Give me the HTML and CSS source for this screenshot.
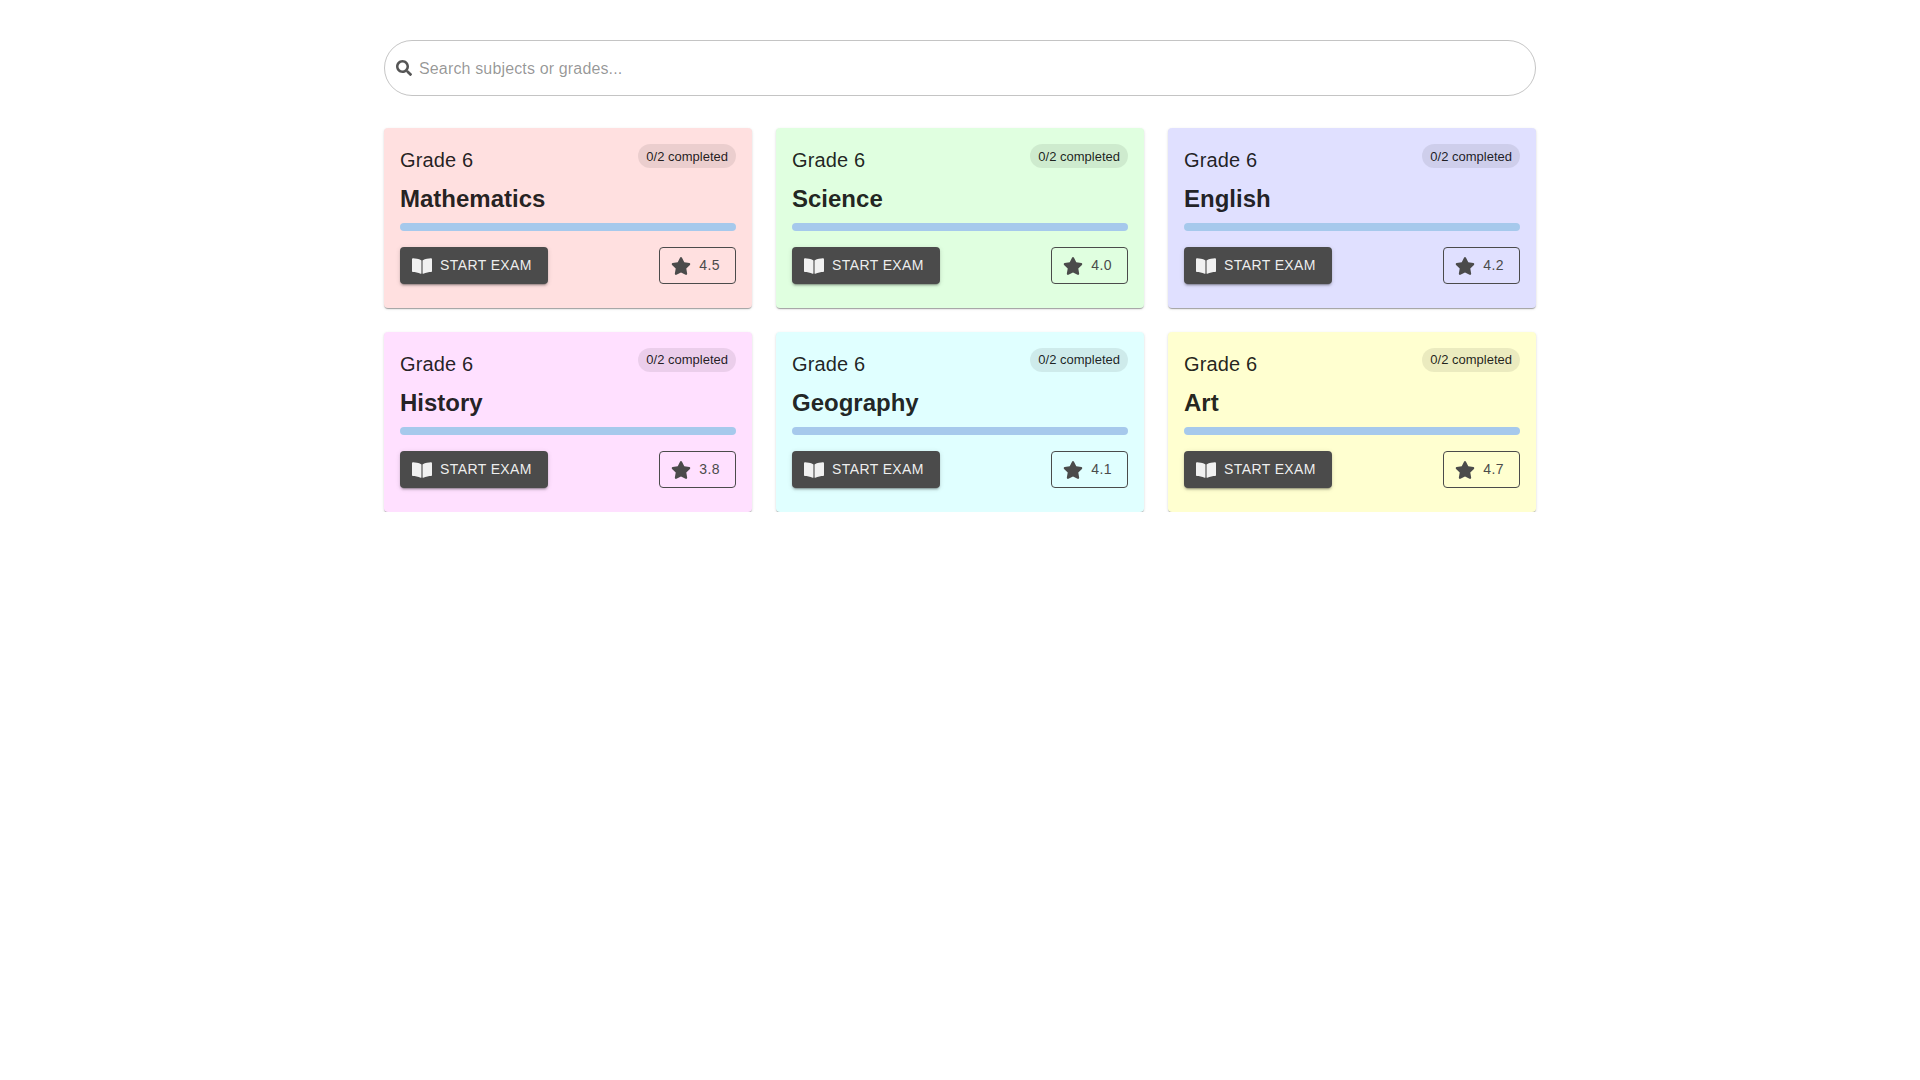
FILE: index.html
```html
<!DOCTYPE html>
<html lang="en">
<head>
<meta charset="utf-8">
<title>Exams</title>
<link rel="stylesheet" href="styles.css">
</head>
<body>
<svg class="defs" width="0" height="0" aria-hidden="true">
  <symbol id="i-book" viewBox="0 0 576 512"><path d="M542.2 32.05c-54.8 3.11-163.7 14.43-231 55.59-4.64 2.84-7.27 7.89-7.27 13.17v363.87c0 11.55 12.63 18.85 23.28 13.49 69.18-34.82 169.23-44.32 218.7-46.92 16.89-.89 30.02-14.43 30.02-30.66V62.75c.01-17.71-15.35-31.74-33.72-30.7zM264.73 87.64C197.5 46.48 88.55 35.17 33.75 32.05 15.38 31.01 0 45.04 0 62.75V400.6c0 16.24 13.13 29.78 30.02 30.66 49.49 2.6 149.59 12.11 218.77 46.95 10.62 5.35 23.21-1.94 23.21-13.46V100.63c0-5.29-2.62-10.14-7.27-12.99z"/></symbol>
  <symbol id="i-star" viewBox="0 0 576 512"><path d="M259.3 17.8L194 150.2 47.9 171.5c-26.2 3.8-36.7 36.1-17.7 54.6l105.7 103-25 145.5c-4.5 26.3 23.2 46 46.4 33.7L288 439.6l130.7 68.7c23.2 12.2 50.9-7.4 46.4-33.7l-25-145.5 105.7-103c19-18.5 8.5-50.8-17.7-54.6L382 150.2 316.7 17.8c-11.7-23.6-45.6-23.9-57.4 0z"/></symbol>
  <symbol id="i-search" viewBox="0 0 512 512"><path d="M505 442.7L405.3 343c-4.5-4.5-10.6-7-17-7H372c27.6-35.3 44-79.7 44-128C416 93.1 322.9 0 208 0S0 93.1 0 208s93.1 208 208 208c48.3 0 92.7-16.4 128-44v16.3c0 6.4 2.5 12.5 7 17l99.7 99.7c9.4 9.4 24.6 9.4 33.9 0l28.3-28.3c9.4-9.4 9.4-24.6.1-34zM208 336c-70.7 0-128-57.2-128-128 0-70.7 57.2-128 128-128 70.7 0 128 57.2 128 128 0 70.7-57.2 128-128 128z"/></symbol>
</svg>
<main class="page">
  <label class="search">
    <svg class="search-icon"><use href="#i-search"/></svg>
    <input class="search-input" type="text" placeholder="Search subjects or grades...">
  </label>
  <section class="grid">
    <article class="card card-red">
      <div class="card-head"><span class="grade">Grade 6</span><span class="badge">0/2 completed</span></div>
      <h2 class="subject">Mathematics</h2>
      <div class="bar"></div>
      <div class="actions">
        <button class="start"><svg class="icon"><use href="#i-book"/></svg>Start Exam</button>
        <button class="rating"><svg class="icon"><use href="#i-star"/></svg>4.5</button>
      </div>
    </article>
    <article class="card card-green">
      <div class="card-head"><span class="grade">Grade 6</span><span class="badge">0/2 completed</span></div>
      <h2 class="subject">Science</h2>
      <div class="bar"></div>
      <div class="actions">
        <button class="start"><svg class="icon"><use href="#i-book"/></svg>Start Exam</button>
        <button class="rating"><svg class="icon"><use href="#i-star"/></svg>4.0</button>
      </div>
    </article>
    <article class="card card-blue">
      <div class="card-head"><span class="grade">Grade 6</span><span class="badge">0/2 completed</span></div>
      <h2 class="subject">English</h2>
      <div class="bar"></div>
      <div class="actions">
        <button class="start"><svg class="icon"><use href="#i-book"/></svg>Start Exam</button>
        <button class="rating"><svg class="icon"><use href="#i-star"/></svg>4.2</button>
      </div>
    </article>
    <article class="card card-pink">
      <div class="card-head"><span class="grade">Grade 6</span><span class="badge">0/2 completed</span></div>
      <h2 class="subject">History</h2>
      <div class="bar"></div>
      <div class="actions">
        <button class="start"><svg class="icon"><use href="#i-book"/></svg>Start Exam</button>
        <button class="rating"><svg class="icon"><use href="#i-star"/></svg>3.8</button>
      </div>
    </article>
    <article class="card card-cyan">
      <div class="card-head"><span class="grade">Grade 6</span><span class="badge">0/2 completed</span></div>
      <h2 class="subject">Geography</h2>
      <div class="bar"></div>
      <div class="actions">
        <button class="start"><svg class="icon"><use href="#i-book"/></svg>Start Exam</button>
        <button class="rating"><svg class="icon"><use href="#i-star"/></svg>4.1</button>
      </div>
    </article>
    <article class="card card-yellow">
      <div class="card-head"><span class="grade">Grade 6</span><span class="badge">0/2 completed</span></div>
      <h2 class="subject">Art</h2>
      <div class="bar"></div>
      <div class="actions">
        <button class="start"><svg class="icon"><use href="#i-book"/></svg>Start Exam</button>
        <button class="rating"><svg class="icon"><use href="#i-star"/></svg>4.7</button>
      </div>
    </article>
  </section>
</main>
</body>
</html>
```
FILE: styles.css
```css
* { box-sizing: border-box; }
body {
  margin: 0;
  background: #fff;
  color: rgba(0,0,0,.87);
  font-family: "Liberation Sans", Arial, sans-serif;
}
.defs { display: block; height: 0; }
.page {
  width: 1152px;
  margin: 0 auto;
  padding-top: 40px;
}
.search {
  display: flex;
  align-items: center;
  height: 56px;
  padding: 0 14px 0 11px;
  gap: 7px;
  border: 1px solid rgba(0,0,0,.23);
  border-radius: 28px;
  margin-bottom: 32px;
}
.search-icon { width: 16px; height: 16px; fill: #555; flex: none; }
.search-input {
  flex: 1;
  border: 0;
  outline: 0;
  padding: 2px 0 0;
  background: transparent;
  font: 16px "Liberation Sans", Arial, sans-serif;
  letter-spacing: .15px;
}
.search-input::placeholder { color: rgba(0,0,0,.42); opacity: 1; }
.grid {
  display: grid;
  grid-template-columns: repeat(3, 1fr);
  gap: 24px;
}
.card {
  padding: 16px 16px 24.5px;
  border-radius: 4px;
  box-shadow: 0 2px 1px -1px rgba(0,0,0,.2), 0 1px 1px 0 rgba(0,0,0,.14), 0 1px 3px 0 rgba(0,0,0,.12);
}
.card-red { background: #ffe0e0; }
.card-green { background: #e0ffe0; }
.card-blue { background: #e0e0ff; }
.card-pink { background: #ffe0ff; }
.card-cyan { background: #e0ffff; }
.card-yellow { background: #ffffd0; }
.card-head {
  display: flex;
  justify-content: space-between;
  align-items: flex-start;
  height: 32px;
}
.grade { font-size: 20px; line-height: 32px; letter-spacing: .15px; }
.badge {
  font-size: 13px;
  line-height: 24px;
  height: 24px;
  padding: 0 8px;
  border-radius: 12px;
  background: rgba(0,0,0,.08);
}
.card:nth-child(-n+3) .badge { line-height: 26px; }
.subject {
  margin: 7px 0 0;
  font-size: 24px;
  line-height: 32px;
  font-weight: 700;
}
.bar {
  height: 8px;
  margin-top: 8px;
  border-radius: 4px;
  background: #a6c9ec;
}
.actions {
  display: flex;
  justify-content: space-between;
  align-items: flex-start;
  margin-top: 16px;
}
button {
  display: inline-flex;
  align-items: center;
  font: 14px/24.5px "Liberation Sans", Arial, sans-serif;
  letter-spacing: .4px;
  border-radius: 4px;
}
.icon { width: 20px; height: 20px; fill: currentColor; flex: none; margin: 2px 8px 0 0; }
.start {
  padding: 6px 16px 6px 12px;
  border: 0;
  color: rgba(255,255,255,.92);
  background: #4b4b4b;
  text-transform: uppercase;
  box-shadow: 0 3px 1px -2px rgba(0,0,0,.2), 0 2px 2px 0 rgba(0,0,0,.14), 0 1px 5px 0 rgba(0,0,0,.12);
}
.rating {
  padding: 5px 15px 5px 11px;
  border: 1px solid #4b4b4b;
  color: #4b4b4b;
  background: transparent;
}
```
